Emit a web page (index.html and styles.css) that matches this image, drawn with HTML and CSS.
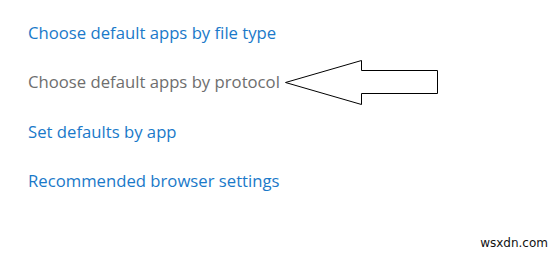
FILE: index.html
```html
<!DOCTYPE html>
<html>
<head>
<meta charset="utf-8">
<link rel="stylesheet" href="styles.css">
</head>
<body>
<div class="page">
  <ul class="links">
    <li class="link">Choose default apps by file type</li>
    <li class="link muted">Choose default apps by protocol</li>
    <li class="link">Set defaults by app</li>
    <li class="link">Recommended browser settings</li>
  </ul>
  <svg class="arrow" width="558" height="256" viewBox="0 0 558 256">
    <polygon points="285.5,82.5 361.5,60.5 361.5,70.5 437.5,70.5 437.5,93.5 361.5,93.5 361.5,104.5" fill="#fff" stroke="#000" stroke-width="1"/>
  </svg>
  <div class="mark">wsxdn.com</div>
</div>
</body>
</html>
```
FILE: styles.css
```css
html, body {
  margin: 0;
  padding: 0;
  background: #fff;
}
.page {
  position: relative;
  width: 558px;
  height: 256px;
  overflow: hidden;
  font-family: "Open Sans", "Noto Sans", sans-serif;
}
.links {
  list-style: none;
  margin: 0;
  padding: 8px 0 0 28px;
  display: flex;
  flex-direction: column;
}
.link {
  font-size: 16.7px;
  line-height: 49.4px;
  height: 49.4px;
  color: #1a79c9;
  white-space: nowrap;
}
.muted {
  color: #6e6e6e;
}
.arrow {
  position: absolute;
  left: 0;
  top: 0;
}
.mark {
  position: absolute;
  right: 10px;
  bottom: 6px;
  font-family: "DejaVu Sans", sans-serif;
  font-size: 12px;
  color: #111;
}
```
